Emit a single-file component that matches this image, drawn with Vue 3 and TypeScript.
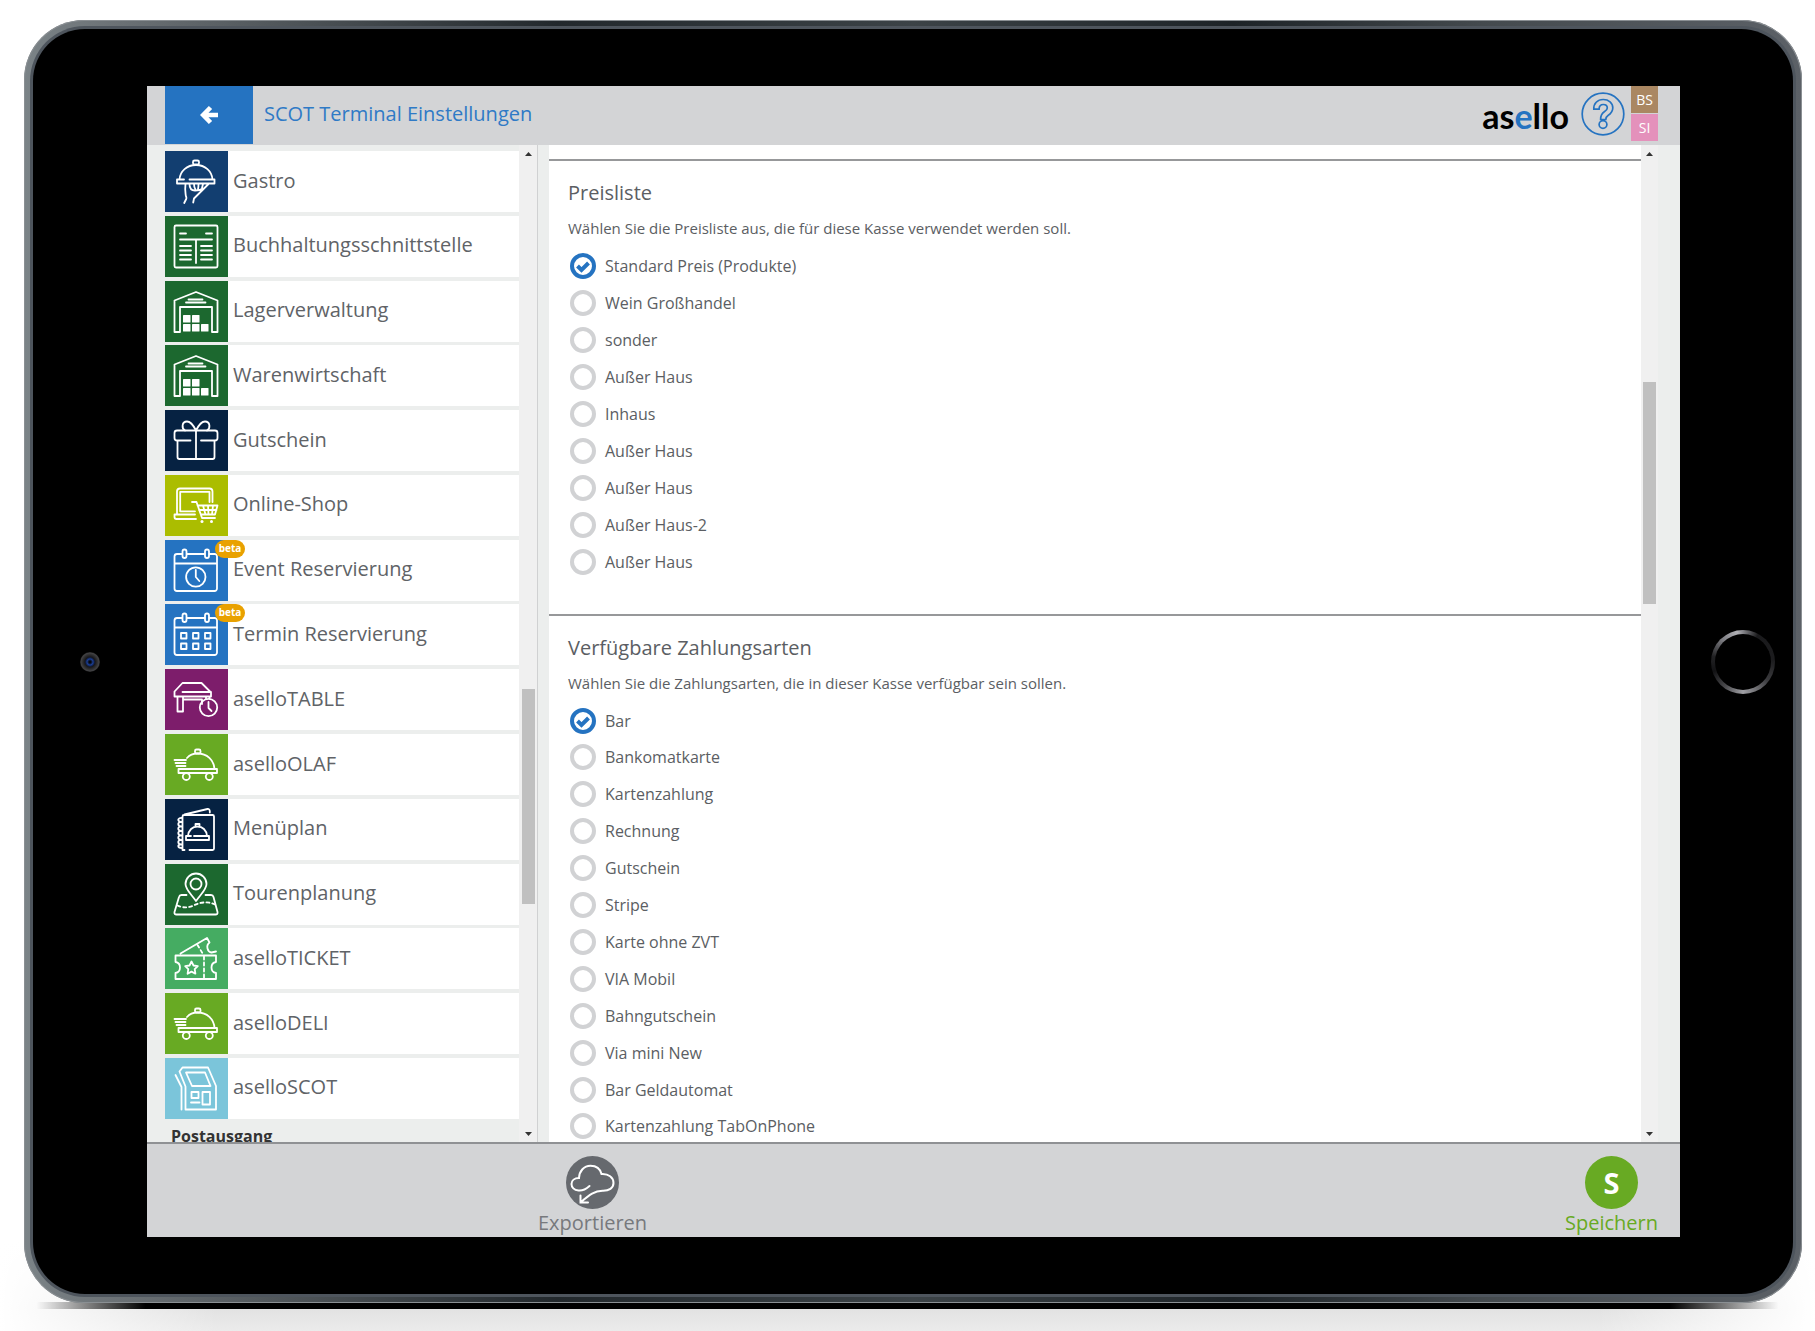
<script setup lang="ts">
import { ref } from 'vue'

interface MenuItem {
  label: string
  icon: string
  tone: string
  beta?: boolean
}

interface Option {
  id: string
  label: string
}

const menu: MenuItem[] = [
  { label: 'Gastro', icon: 'gastro', tone: 'ocean' },
  { label: 'Buchhaltungsschnittstelle', icon: 'ledger', tone: 'forest' },
  { label: 'Lagerverwaltung', icon: 'warehouse', tone: 'forest' },
  { label: 'Warenwirtschaft', icon: 'warehouse', tone: 'forest' },
  { label: 'Gutschein', icon: 'gift', tone: 'navy' },
  { label: 'Online-Shop', icon: 'shop', tone: 'lime' },
  { label: 'Event Reservierung', icon: 'event', tone: 'blue', beta: true },
  { label: 'Termin Reservierung', icon: 'calendar', tone: 'blue', beta: true },
  { label: 'aselloTABLE', icon: 'table', tone: 'purple' },
  { label: 'aselloOLAF', icon: 'delivery', tone: 'green' },
  { label: 'Menüplan', icon: 'menu', tone: 'navy' },
  { label: 'Tourenplanung', icon: 'tour', tone: 'forest' },
  { label: 'aselloTICKET', icon: 'ticket', tone: 'mint' },
  { label: 'aselloDELI', icon: 'delivery', tone: 'green' },
  { label: 'aselloSCOT', icon: 'kiosk', tone: 'sky' },
]

const toOptions = (prefix: string, labels: string[]): Option[] =>
  labels.map((label, i) => ({ id: `${prefix}-${i}`, label }))

const priceLists = toOptions('preis', [
  'Standard Preis (Produkte)',
  'Wein Großhandel',
  'sonder',
  'Außer Haus',
  'Inhaus',
  'Außer Haus',
  'Außer Haus',
  'Außer Haus-2',
  'Außer Haus',
])

const payments = toOptions('zahlung', [
  'Bar',
  'Bankomatkarte',
  'Kartenzahlung',
  'Rechnung',
  'Gutschein',
  'Stripe',
  'Karte ohne ZVT',
  'VIA Mobil',
  'Bahngutschein',
  'Via mini New',
  'Bar Geldautomat',
  'Kartenzahlung TabOnPhone',
])

const priceList = ref('preis-0')
const activePayments = ref<string[]>(['zahlung-0'])

const menuScroll = { before: 527, thumb: 215, after: 221 }
const contentScroll = { before: 220, thumb: 222, after: 521 }
</script>

<template>
  <div class="page">
    <div class="tablet">
      <div class="glass">
        <div class="bezel"><span class="camera"></span></div>

        <div class="screen">
          <header class="topbar">
            <button class="back" type="button" aria-label="Zurück">
              <svg width="18" height="20" viewBox="0 0 18 20" fill="none" stroke="#fff" stroke-width="4.6">
                <path d="M10.5 2.5L3.2 10l7.3 7.5M3.5 10H18" />
              </svg>
            </button>
            <h1>SCOT Terminal Einstellungen</h1>
            <div class="logo">as<span>e</span>llo</div>
            <button class="help" type="button" aria-label="Hilfe">
              <svg width="44" height="44" viewBox="0 0 44 44" fill="none" stroke="#2573c1" stroke-width="1.7">
                <circle cx="22" cy="22" r="20.8" />
                <path d="M12.8 17.2c-.4-5.600 3.700-9.700 9.400-9.700 5.500 0 9.600 3.300 9.600 8.300 0 3.800-2 5.900-4.800 7.700-1.700 1.100-2.200 1.800-2.200 4h-5.200c0-4 .8-5.800 3.700-7.700 2-1.300 3-2.200 3-3.900 0-2.200-1.600-3.400-4-3.400-2.700 0-4.200 1.700-4.200 4.700z" />
                <circle cx="22" cy="32.500" r="3.900" />
              </svg>
            </button>
            <div class="users">
              <span class="user brown">BS</span>
              <span class="user pink">SI</span>
            </div>
          </header>

          <div class="body">
            <aside class="side">
              <div class="side-content">
                <nav class="menu">
                  <a v-for="item in menu" :key="item.label" class="item" href="#">
                    <span class="tile" :class="item.tone">
                      <svg viewBox="0 0 63 61" width="63" height="61">
                        <template v-if="item.icon === 'gastro'">
                          <rect x="28" y="9.500" width="6" height="4" rx="1.500" />
                          <path d="M14.500 28.500C15 20 22 14 31 14s16 6 16.500 14.500M19 28.500h-7v4h37.500v-4H24.500M20.500 33c-.7 5 0 9 .2 11 .2 2 1.300 2.500.5 4l-2 4M24.500 33c0 4 2 6.500 5.500 6.500s6-.5 8-2M29 33c0 2 .5 4 1.500 5.500M33.500 33c0 2 0 3-.5 5M38 33l-1 4M43.500 33L29 47.500l-.8 4" />
                        </template>
                        <template v-else-if="item.icon === 'ledger'">
                          <rect x="9.500" y="9.500" width="43" height="42" rx="1.500" />
                          <path d="M15 17.500h6M41 17.500h6M15 23.500h32M31 23.500V47M15 30h11M15 34.500h11M15 39h11M15 43.500h11M36 30h11M36 34.500h11M36 39h11M36 43.500h11" />
                        </template>
                        <template v-else-if="item.icon === 'warehouse'">
                          <path d="M9.500 19.500L31 11l21.500 8.500V51H47V26H15v25H9.500zM23.500 18.500h14M21 21.500h19.500" />
                          <g class="solid">
                            <rect x="18" y="34" width="7.500" height="7.500" rx=".6" />
                            <rect x="27" y="34" width="7.500" height="7.500" rx=".6" />
                            <rect x="18" y="43" width="7.500" height="7.500" rx=".6" />
                            <rect x="27" y="43" width="7.500" height="7.500" rx=".6" />
                            <rect x="36" y="43" width="7.500" height="7.500" rx=".6" />
                          </g>
                        </template>
                        <template v-else-if="item.icon === 'gift'">
                          <path d="M25.500 30.500H12a2.500 2.500 0 0 1-2.500-2.500v-5a2.500 2.500 0 0 1 2.500-2.500h38a2.500 2.500 0 0 1 2.500 2.500v5a2.500 2.500 0 0 1-2.500 2.500H36M12.500 30.500V47a2 2 0 0 0 2 2h33a2 2 0 0 0 2-2V30.500M31 20.500V49" />
                          <path d="M31 20.500c-1.500-3-5-9-9-9-5.500 0-5.500 7-2 9M31 20.500c1.500-3 5-9 9-9 5.500 0 5.500 7 2 9" />
                        </template>
                        <template v-else-if="item.icon === 'shop'">
                          <path d="M12 38.500V16.500a3 3 0 0 1 3-3h29.500a3 3 0 0 1 3 3V27M44.500 27V16.800H15.200v19.500H30M30 39.500H9.500V42a2 2 0 0 0 2 2H31M27 27h4.500L37 43h13M32.500 30.500h20L50 39.500H36M34 35h17.500M38 30.500l2.500 9M43 30.500l.5 9M48 30.500l-1 9" />
                          <g class="solid"><circle cx="37" cy="46.500" r="1.500" /><circle cx="46.500" cy="46.500" r="1.500" /></g>
                        </template>
                        <template v-else-if="item.icon === 'event' || item.icon === 'calendar'">
                          <path d="M17 14h-5a2.500 2.500 0 0 0-2.500 2.500v32A2.500 2.500 0 0 0 12 51h37.500a2.500 2.500 0 0 0 2.500-2.500v-32a2.500 2.500 0 0 0-2.500-2.500h-5M22 14h17.500M9.500 23.500H52" />
                          <rect x="17.500" y="9.500" width="4" height="8.500" rx="2" />
                          <rect x="40" y="9.500" width="4" height="8.500" rx="2" />
                          <g v-if="item.icon === 'event'">
                            <circle cx="30.800" cy="37" r="9.700" />
                            <path d="M30.800 30v7l3.500 4" />
                          </g>
                          <g v-else>
                            <path d="M16 29h5.500v5.500H16zM28 29h5.500v5.500H28zM40 29h5.500v5.500H40zM16 39.500h5.500V45H16zM28 39.500h5.500V45H28zM40 39.500h5.500V45H40z" />
                          </g>
                        </template>
                        <template v-else-if="item.icon === 'table'">
                          <path d="M17.500 14h19L46 23.500v4H9.500v-5zM17.500 23H46M12.500 27.500v15H18v-15M18 30.500h19V35M41 27.500v2M44.500 27.500v2" />
                          <circle cx="43.500" cy="38.500" r="8.700" />
                          <path d="M43.500 33v6l3 3" />
                        </template>
                        <template v-else-if="item.icon === 'delivery'">
                          <rect x="30" y="15.500" width="5.500" height="4" rx="1.500" />
                          <path d="M22 24c2.500-3 6-4.500 10.500-4.500 9.500 0 16.500 6.500 17 15.500M9.500 26H21M10.500 29H20.500M11.500 32H20.500M13.500 35H52v4H13.500z" />
                          <circle cx="21.300" cy="42.500" r="3.500" />
                          <circle cx="44.300" cy="42.500" r="3.500" />
                        </template>
                        <template v-else-if="item.icon === 'menu'">
                          <path d="M19.500 51h-2V17.500q0-1.500 1.500-1.500h28.500q1.500 0 1.500 1.500v32q0 1.500-1.500 1.500H24.500M19.500 15.500L42.500 10q2-.3 2.300 2v1.500" />
                          <path d="M17 19c-5-.5-5 4 0 4-5-.5-5 4.500 0 4.500-5-.5-5 4.500 0 4.500-5-.5-5 4.500 0 4.500-5-.5-5 4.500 0 4.500-5-.5-5 4.500 0 4.500-5-.5-5 3.500 0 3.500" />
                          <path d="M23 37c.5-6 4.500-9.500 9.500-9.500s9 3.500 9.500 9.500M26 37h-5v4h23v-4H29M30.500 27.500v-2.500h4v2.500" />
                        </template>
                        <template v-else-if="item.icon === 'tour'">
                          <path d="M31 37c-5-7-10.500-11.500-10.500-17a10.500 10.500 0 0 1 21 0c0 5.500-5.500 10-10.500 17z" />
                          <circle cx="31" cy="20" r="5.500" />
                          <path d="M21.500 31H16.500q-2 0-2.500 2L9.500 48q-.5 2.500 2 2.500h39q2.500 0 2-2.500L48.500 33q-.5-2-2.500-2H40.500" />
                          <path class="dash" d="M12.500 41.500c5 2.500 11 2.500 16 0s13-5 21.500-1" />
                        </template>
                        <template v-else-if="item.icon === 'ticket'">
                          <path d="M10.500 27.500H51v6.500c-6 1-6 10 0 11v6H10.500v-6c6-1 6-10 0-11zM15.500 25.500L42 10l2.500 4.500c-4 3-2 9.500 2 10l4.500-1" />
                          <path d="M26.500 33.500l2 4 4.300.7-3.100 3 .7 4.500-3.900-2.100-3.900 2.100.7-4.500-3.100-3 4.300-.7z" />
                          <path class="dash" d="M39 28.500V50M32.500 17l5.500 9" />
                        </template>
                        <template v-else>
                          <path d="M10.500 17l6 12v22.500M14.500 13.500L17.500 9.500H43L51 28v23.500H20.500V28.500zM21 14.500h19L45.500 28H27zM26.500 34H33.500v6H26.500zM37.500 34h7.500v12.500h-7.500zM26 44.500h8.500" />
                        </template>
                      </svg>
                    </span>
                    <span class="item-label">{{ item.label }}</span>
                    <span v-if="item.beta" class="beta">beta</span>
                  </a>
                </nav>
                <h2 class="group">Postausgang</h2>
              </div>
              <div class="scrollbar">
                <svg class="arrow" viewBox="0 0 17 17"><path d="M5 11l3.500-4 3.500 4z" /></svg>
                <span :style="{ flexGrow: menuScroll.before }"></span>
                <span class="thumb" :style="{ flexGrow: menuScroll.thumb }"></span>
                <span :style="{ flexGrow: menuScroll.after }"></span>
                <svg class="arrow" viewBox="0 0 17 17"><path d="M5 7l3.500 4L12 7z" /></svg>
              </div>
            </aside>

            <main class="main">
              <div class="content">
                <section class="card">
                  <h2>Preisliste</h2>
                  <p>Wählen Sie die Preisliste aus, die für diese Kasse verwendet werden soll.</p>
                  <div class="options">
                    <label v-for="option in priceLists" :key="option.id" class="option">
                      <span class="mark">
                        <input v-model="priceList" type="radio" name="preisliste" :value="option.id" />
                        <svg viewBox="0 0 26 26" width="26" height="26"><path d="M7.500 13l4 4 7-7" /></svg>
                      </span>
                      {{ option.label }}
                    </label>
                  </div>
                </section>
                <section class="card last">
                  <h2>Verfügbare Zahlungsarten</h2>
                  <p>Wählen Sie die Zahlungsarten, die in dieser Kasse verfügbar sein sollen.</p>
                  <div class="options">
                    <label v-for="option in payments" :key="option.id" class="option">
                      <span class="mark">
                        <input v-model="activePayments" type="checkbox" :value="option.id" />
                        <svg viewBox="0 0 26 26" width="26" height="26"><path d="M7.500 13l4 4 7-7" /></svg>
                      </span>
                      {{ option.label }}
                    </label>
                  </div>
                </section>
              </div>
              <div class="scrollbar">
                <svg class="arrow" viewBox="0 0 17 17"><path d="M5 11l3.500-4 3.500 4z" /></svg>
                <span :style="{ flexGrow: contentScroll.before }"></span>
                <span class="thumb" :style="{ flexGrow: contentScroll.thumb }"></span>
                <span :style="{ flexGrow: contentScroll.after }"></span>
                <svg class="arrow" viewBox="0 0 17 17"><path d="M5 7l3.500 4L12 7z" /></svg>
              </div>
            </main>
          </div>

          <footer class="footer">
            <button class="action export" type="button">
              <svg viewBox="0 0 53 53" width="53" height="53">
                <circle cx="26.500" cy="26.500" r="26.500" fill="#66696e" />
                <path
                  d="M23.500 30c-4 3.500-7.500 5-11 4.500C8 34 5.500 31 5.500 28c0-3.500 3-6 7.500-6 .3-7 5-12.300 11.500-12.300 5.500 0 9.700 3 11 8.300 7-.5 12 3.500 12 9 0 5-4.500 8-11 7.800-8 .2-12.500 3.700-22 11.700M14.500 39.500v7h7.500"
                  fill="none" stroke="#fff" stroke-width="2" stroke-linecap="round" />
              </svg>
              Exportieren
            </button>
            <button class="action save" type="button">
              <span class="disc">S</span>
              Speichern
            </button>
          </footer>
        </div>

        <div class="bezel right"><span class="home"></span></div>
      </div>
    </div>
  </div>
</template>

<style>
body {
  margin: 0;
  background: #fff;
}
</style>

<style scoped>
* {
  box-sizing: border-box;
}

.page {
  height: 100vh;
  min-height: 800px;
  padding: 20px 13px 28px 24px;
  overflow: hidden;
  font-family: 'Open Sans', 'Noto Sans', sans-serif;
  color: #5b5e63;
  background:
    linear-gradient(90deg, transparent 2%, #000 8%, #000 92%, transparent 98%) bottom 22px left 0 / 100% 7px no-repeat,
    linear-gradient(90deg, #fff 0, transparent 12%, transparent 88%, #fff 100%) bottom / 100% 90px no-repeat,
    linear-gradient(#fff, #e2e2e2 75%, #ebebeb) bottom / 100% 90px no-repeat,
    #fff;
}

.tablet {
  display: flex;
  height: 100%;
  padding: 9px;
  border-radius: 60px;
  background:
    linear-gradient(90deg, #7b8387 0, #6c7276 5%, #22282c 30%, #3c4347 50%, #1d2327 68%, #444a4e 82%, #5c6167 100%);
  box-shadow: inset 0 0 0 1px #8a8f93;
}

.glass {
  display: grid;
  flex: 1;
  grid-template-columns: 114px minmax(0, 1fr) 113px;
  padding: 57px 0;
  border-radius: 52px;
  background: #000;
  box-shadow: 0 0 0 3px #4e555d;
}

.bezel {
  display: flex;
  align-items: center;
  justify-content: center;
}

.bezel.right {
  padding-left: 12px;
}

.camera {
  width: 20px;
  height: 20px;
  border-radius: 50%;
  background: radial-gradient(circle, #05070d 0 1px, #1c3f92 3px, #10245a 4px, #17171a 5px, #2c2c2e 7px, #424244 9px, #222 10px);
}

.home {
  width: 64px;
  height: 64px;
  padding: 4px;
  border-radius: 50%;
  background: conic-gradient(#85858a 0, #1a1a1c 8%, #1c1c1e 24%, #3a3a3d 35%, #a0a0a5 50%, #4a4a4d 60%, #121214 70%, #222224 78%, #7b7b80 88%, #b0b0b5 97%, #85858a 100%);
}

.home::before {
  display: block;
  height: 100%;
  border-radius: 50%;
  background: #000;
  content: '';
}

.screen {
  display: flex;
  flex-direction: column;
  min-height: 0;
  background: #eceeed;
}

button {
  padding: 0;
  border: 0;
  background: none;
  color: inherit;
  font: inherit;
  cursor: pointer;
}

svg {
  display: block;
}

.topbar {
  display: flex;
  flex: none;
  height: 59px;
  padding: 0 22px 0 18px;
  background: #d3d4d6;
}

.back {
  display: flex;
  align-items: center;
  justify-content: center;
  width: 88px;
  height: 58px;
  background: #2573c1;
}

h1 {
  flex: 1;
  margin: 0;
  padding-left: 11px;
  color: #2f7ac6;
  font-size: 20px;
  font-weight: 400;
  line-height: 55px;
}

.logo {
  color: #000;
  font-family: Lato, sans-serif;
  font-size: 34px;
  font-weight: 700;
  line-height: 60px;
}

.logo span {
  color: #2573c1;
}

.help {
  align-self: flex-start;
  margin: 6px 6px 0 12px;
}

.users {
  display: flex;
  flex-direction: column;
  gap: 1px;
  width: 27px;
}

.user {
  height: 27px;
  color: #fff;
  font-size: 14px;
  line-height: 27px;
  text-align: center;
}

.brown {
  background: #aa8762;
}

.pink {
  background: #e491bb;
}

.body {
  display: flex;
  flex: 1;
  min-height: 0;
  overflow: hidden;
}

.side {
  display: flex;
  flex: none;
  width: 391px;
  border-right: 1px solid #d0d1d2;
}

.side-content {
  display: flex;
  flex: 1;
  flex-direction: column;
  min-height: 0;
  padding: 6px 0 0 18px;
}

.menu {
  display: flex;
  flex: 1;
  flex-direction: column;
  justify-content: space-between;
  min-height: 0;
}

.item {
  position: relative;
  display: flex;
  flex: none;
  align-items: center;
  height: 61px;
  background: #fff;
  color: #606367;
  text-decoration: none;
}

.tile {
  width: 63px;
  height: 61px;
}

.tile svg {
  fill: none;
  stroke: #fff;
  stroke-linecap: round;
  stroke-linejoin: round;
  stroke-width: 1.8;
}

.solid {
  fill: #fff;
  stroke: none;
}

.dash {
  stroke-dasharray: 3 3;
}

.ocean { background: #123e70; }
.forest { background: #1c682f; }
.navy { background: #062242; }
.lime { background: #abbd00; }
.blue { background: #2573c1; }
.purple { background: #7d1d6b; }
.green { background: #68aa23; }
.mint { background: #45ac62; }
.sky { background: #7bc5da; }

.item-label {
  padding: 0 0 2px 5px;
  font-size: 20px;
  font-weight: 400;
  line-height: 28px;
}

.beta {
  position: absolute;
  top: 0;
  left: 50px;
  width: 30px;
  height: 18px;
  border-radius: 9px;
  background: #e9a100;
  color: #fff;
  font-size: 10px;
  font-weight: 700;
  line-height: 17px;
  text-align: center;
}

.group {
  flex: none;
  height: 23px;
  margin: 0;
  padding-left: 6px;
  color: #333;
  font-size: 16px;
  font-weight: 700;
  line-height: 34px;
}

.scrollbar {
  display: flex;
  flex: none;
  flex-direction: column;
  width: 17px;
  background: #f0f0f0;
}

.arrow {
  flex: none;
  align-self: center;
  width: 17px;
  height: 17px;
  fill: #333;
}

.thumb {
  margin: 0 2px;
  background: #c0c0c0;
}

.side .scrollbar {
  width: 18px;
}

.side .thumb {
  margin-left: 3px;
}

.main {
  display: flex;
  flex: 1;
  min-width: 0;
  padding: 0 22px 0 11px;
}

.content {
  display: flex;
  flex: 1;
  flex-direction: column;
  min-width: 0;
  padding-top: 14px;
  background: #fff;
}

.card {
  padding: 18px 19px 39px;
  border-top: 2px solid #97989a;
}

.card.last {
  display: flex;
  flex: 1;
  flex-direction: column;
  min-height: 0;
  padding-bottom: 2px;
}

.card h2 {
  margin: 0;
  font-size: 20px;
  font-weight: 400;
  line-height: 28px;
}

.card p {
  margin: 8px 0 11px;
  font-size: 15px;
  line-height: 26px;
}

.options {
  display: flex;
  flex: 1;
  flex-direction: column;
  justify-content: space-between;
  gap: 10px;
}

.last .options {
  gap: 0;
}

.option {
  display: flex;
  align-items: center;
  gap: 9px;
  height: 27px;
  padding-left: 2px;
  font-size: 16px;
}

.mark {
  display: grid;
}

.mark > * {
  grid-area: 1 / 1;
}

.mark input {
  width: 26px;
  height: 26px;
  margin: 0;
  border: 4px solid #d1d2d4;
  border-radius: 50%;
  background: #fff;
  appearance: none;
}

.mark input:checked {
  border-color: #2573c1;
}

.mark svg {
  fill: none;
  stroke: none;
  stroke-width: 4;
  pointer-events: none;
}

.mark input:checked + svg {
  stroke: #2573c1;
}

.footer {
  display: flex;
  flex: none;
  justify-content: space-between;
  height: 95px;
  padding: 12px 22px 0 391px;
  border-top: 2px solid #8f9194;
  background: #d3d4d6;
}

.action {
  display: flex;
  flex-direction: column;
  align-items: center;
  justify-content: flex-start;
  font-size: 20px;
  font-weight: 400;
  line-height: 28px;
}

.export {
  color: #77797d;
}

.save {
  color: #68aa23;
}

.disc {
  width: 53px;
  height: 53px;
  border-radius: 50%;
  background: #68aa23;
  color: #fff;
  font-size: 29px;
  font-weight: 700;
  line-height: 53px;
}
</style>
